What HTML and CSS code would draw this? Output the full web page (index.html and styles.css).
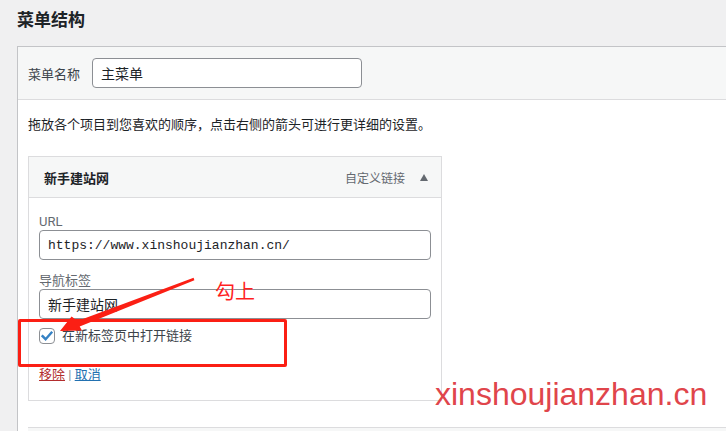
FILE: index.html
```html
<!DOCTYPE html>
<html lang="zh-CN">
<head>
  <meta charset="UTF-8">
  <title>菜单结构</title>
  <meta name="viewport" content="width=device-width, initial-scale=1.0">
  <link rel="stylesheet" href="styles.css">
</head>
<body>

  <div class="wrap">
    <h2 class="page-title">菜单结构</h2>

    <div class="menu-panel">
      <div class="menu-header">
        <label for="menuName" class="menu-name-label">菜单名称</label>
        <input type="text" id="menuName" class="menu-name" value="主菜单">
      </div>

      <div class="menu-body">
        <p class="drag-tip">拖放各个项目到您喜欢的顺序，点击右侧的箭头可进行更详细的设置。</p>

        <div class="menu-item">
          <div class="item-bar">
            <span class="item-title">新手建站网</span>
            <span class="item-controls">
              <span class="item-type">自定义链接</span>
              <span class="item-toggle"></span>
            </span>
          </div>

          <div class="item-settings">
            <div class="field">
              <label for="itemUrl">URL</label>
              <input type="text" id="itemUrl" class="code" value="https://www.xinshoujianzhan.cn/">
            </div>
            <div class="field">
              <label for="itemTitle">导航标签</label>
              <input type="text" id="itemTitle" value="新手建站网">
            </div>
            <label class="check-row">
              <span class="checkbox">
                <svg viewBox="0 0 16 16" width="16" height="16"><path d="M3.6 8.2 L6.6 11.2 L12.4 4.6" fill="none" stroke="#3582c4" stroke-width="2.4" stroke-linecap="square"/></svg>
              </span>
              在新标签页中打开链接
            </label>
            <div class="item-actions">
              <a href="#" class="delete">移除</a> <span class="sep">|</span> <a href="#" class="cancel">取消</a>
            </div>
          </div>
        </div>

        <div class="menu-footer"></div>
      </div>
    </div>
  </div>

  <!-- 标注 -->
  <div class="mark-box"></div>
  <span class="mark-text">勾上</span>
  <svg class="mark-arrow" width="726" height="431" viewBox="0 0 726 431">
    <polygon points="60,331 71.6,316.5 77.5,321 193.6,277.8 194.4,280.2 79.7,326.6 82,330.5" fill="#fb1f14"/>
  </svg>
  <span class="watermark">xinshoujianzhan.cn</span>

</body>
</html>
```

FILE: styles.css
```css
:root {
  --text: #1d2327;
  --text-soft: #3c434a;
  --text-muted: #646970;
  --border: #c3c4c7;
  --border-light: #dcdcde;
  --input-border: #8c8f94;
  --bar-bg: #f6f7f7;
  --mark-red: #fb1f14;
}

body {
  margin: 0;
  padding: 0;
  width: 726px;
  height: 431px;
  overflow: hidden;
  position: relative;
  background-color: #f0f0f1;
  font-family: Roboto, "Noto Sans CJK SC", sans-serif;
  font-size: 13px;
  color: var(--text-soft);
}

.wrap {
  padding-left: 17px;
}

.page-title {
  margin: 8px 0 14px 0;
  font-size: 17px;
  line-height: 24px;
  font-weight: 600;
  color: var(--text);
}

.menu-panel {
  margin-right: -20px;
  background-color: #fff;
  border: 1px solid var(--border);
  border-right: none;
}

.menu-header {
  display: flex;
  align-items: center;
  padding: 11px 10px;
  background-color: var(--bar-bg);
  border-bottom: 1px solid var(--border-light);
}

.menu-name-label {
  margin-right: 12px;
  color: var(--text-soft);
}

input[type="text"] {
  box-sizing: border-box;
  height: 30px;
  padding: 0 8px;
  border: 1px solid var(--input-border);
  border-radius: 4px;
  background: #fff;
  font-family: Roboto, "Noto Sans CJK SC", sans-serif;
  font-size: 14px;
  color: var(--text);
}

.menu-name {
  width: 270px;
}

.menu-body {
  padding: 15px 10px 0 10px;
}

.drag-tip {
  margin: 0 0 21px 0;
  line-height: 20px;
  color: var(--text);
}

.menu-item {
  width: 414px;
  box-sizing: border-box;
  border: 1px solid var(--border-light);
}

.item-bar {
  display: flex;
  justify-content: space-between;
  align-items: center;
  height: 40px;
  padding: 0 13px 0 15px;
  background-color: var(--bar-bg);
  border-bottom: 1px solid var(--border-light);
}

.item-title {
  font-weight: 600;
  color: var(--text);
}

.item-controls {
  display: flex;
  align-items: center;
  gap: 15px;
  color: var(--text-muted);
  font-size: 12px;
}

.item-toggle {
  width: 0;
  height: 0;
  border-left: 4.5px solid transparent;
  border-right: 4.5px solid transparent;
  border-bottom: 7px solid #646970;
}

.item-settings {
  padding: 16px 10px 15px 10px;
}

.field {
  margin-bottom: 13px;
}

.field label {
  display: block;
  line-height: 16px;
  color: var(--text-muted);
}

.field input {
  width: 100%;
}

.field input.code {
  font-family: "Liberation Mono", monospace;
  font-size: 13px;
}

.check-row {
  display: flex;
  align-items: center;
  margin-top: -6px;
  line-height: 20px;
  color: var(--text-soft);
}

.checkbox {
  box-sizing: border-box;
  width: 16px;
  height: 16px;
  margin-right: 7px;
  border: 1px solid var(--input-border);
  border-radius: 4px;
  background: #fff;
  display: flex;
  align-items: center;
  justify-content: center;
}

.checkbox svg {
  flex: none;
}

.item-actions {
  margin-top: 19px;
  line-height: 20px;
}

.item-actions a {
  text-decoration: underline;
}

.delete {
  color: #b32d2e;
}

.cancel {
  color: #2271b1;
}

.sep {
  color: #8c8f94;
}

.menu-footer {
  margin-top: 26px;
  height: 10px;
  border-top: 1px solid var(--border-light);
  background-color: var(--bar-bg);
}

/* 标注 */
.mark-box {
  position: absolute;
  left: 18px;
  top: 319px;
  width: 263px;
  height: 42px;
  border: 3px solid var(--mark-red);
  border-radius: 2px;
}

.mark-text {
  position: absolute;
  left: 215px;
  top: 281px;
  font-family: "Noto Sans CJK SC", sans-serif;
  font-size: 20px;
  line-height: 20px;
  color: #ff1f1f;
}

.mark-arrow {
  position: absolute;
  left: 0;
  top: 0;
  pointer-events: none;
}

.watermark {
  position: absolute;
  left: 435px;
  top: 378px;
  font-family: "Liberation Sans", Arial, sans-serif;
  font-size: 32px;
  line-height: 32px;
  color: #e0454b;
}
```
